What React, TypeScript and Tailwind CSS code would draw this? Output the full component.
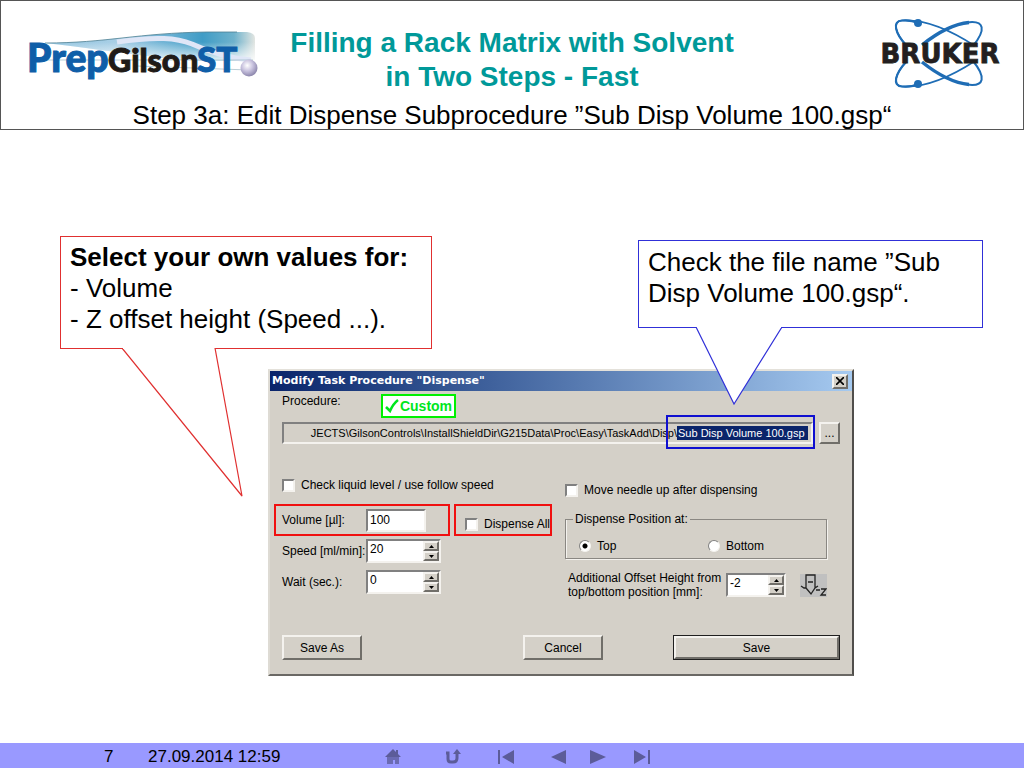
import { useState } from "react";
import type { ReactNode } from "react";

const DIRECTORY =
	"JECTS\\GilsonControls\\InstallShieldDir\\G215Data\\Proc\\Easy\\TaskAdd\\Disp\\";

const sunken =
	"border-2 border-t-[#808080] border-l-[#808080] border-r-[#f4f2ee] border-b-[#f4f2ee]";
const raised =
	"border-2 border-t-[#f4f2ee] border-l-[#f4f2ee] border-r-[#706e69] border-b-[#706e69] bg-[#d4d0c8]";

function GilsonLogo() {
	return (
		<svg
			aria-label="PrepGilsonST"
			className="h-[60px] w-[240px]"
			role="img"
			viewBox="0 0 240 60"
		>
			<defs>
				<linearGradient id="swoosh" x1="0" x2="1" y1="0" y2="0">
					<stop offset="0" stopColor="#8fc3de" />
					<stop offset="0.35" stopColor="#a9cfe6" />
					<stop offset="0.75" stopColor="#3f9cc6" />
					<stop offset="0.9" stopColor="#6fb2cc" />
					<stop offset="1" stopColor="#e3e6e2" />
				</linearGradient>
				<linearGradient id="swooshFade" x1="0" x2="0" y1="0" y2="1">
					<stop offset="0.35" stopColor="#ffffff" stopOpacity="0" />
					<stop offset="1" stopColor="#ffffff" stopOpacity="0.85" />
				</linearGradient>
				<radialGradient cx="0.4" cy="0.35" id="bead" r="0.65">
					<stop offset="0" stopColor="#ffffff" />
					<stop offset="0.5" stopColor="#c9c3df" />
					<stop offset="1" stopColor="#8d87ad" />
				</radialGradient>
			</defs>
			<path
				d="M18 17C80 17 110 7 180 6H220Q228 7 228 12V34C190 36 150 34 120 30C90 26 60 22 18 17Z"
				fill="url(#swoosh)"
			/>
			<path
				d="M18 17C80 17 110 7 180 6H220Q228 7 228 12V34C190 36 150 34 120 30C90 26 60 22 18 17Z"
				fill="url(#swooshFade)"
			/>
			<path
				d="M18 17C80 17 110 7 180 6H210"
				fill="none"
				stroke="#4c7f92"
				strokeWidth="0.8"
			/>
			<path
				d="M90 16C130 10 150 12 165 18C180 25 200 32 224 34"
				fill="none"
				stroke="#dfe6f7"
				strokeWidth="5"
			/>
			<path d="M12 34H226M110 40L222 44" stroke="#9bb7c4" strokeWidth="0.7" />
			<g
				fill="#0f5ea8"
				fontFamily="Lato, sans-serif"
				fontWeight="900"
				stroke="#0f5ea8"
			>
				<text fontSize="39" x="0" y="46">
					Prep
				</text>
				<text fontSize="35" x="170" y="46">
					ST
				</text>
			</g>
			<text
				fill="#1f1a17"
				fontFamily="Lato, sans-serif"
				fontSize="32"
				fontWeight="900"
				stroke="#1f1a17"
				x="81"
				y="46"
			>
				Gilson
			</text>
			<circle cx="222" cy="42" fill="url(#bead)" r="8.5" />
		</svg>
	);
}

function BrukerLogo() {
	return (
		<svg
			aria-label="Bruker"
			className="h-[72px] w-[126px]"
			role="img"
			viewBox="0 0 126 72"
		>
			<g fill="none" stroke="#1f6db5">
				<path d="M29 27C18 15 15 3 25 2.500C48 1 75 13 98 28" strokeWidth="1.600" />
				<path d="M29 27C18 15 15 3 25 2.500C32 2 37 3 41 5" strokeWidth="2.200" />
				<path d="M45 27C60 15 76 6 92 4.500" strokeWidth="3.500" />
				<path d="M90 4.500C108 2 109 12 96 28" strokeWidth="2" />
				<path d="M29 44C18 56 15 68 25 68.500C48 70 75 58 98 43" strokeWidth="1.600" />
				<path d="M29 44C18 56 15 68 25 68.500C32 69 37 68 41 66" strokeWidth="2.200" />
				<path d="M45 44C60 56 76 65 92 66.500" strokeWidth="3.500" />
				<path d="M90 66.500C108 69 109 59 96 43" strokeWidth="2" />
			</g>
			<circle cx="41" cy="5" fill="#1f6db5" r="4" />
			<circle cx="41" cy="66" fill="#1f6db5" r="4" />
			<text
				fill="#231f20"
				fontFamily="'DejaVu Sans', sans-serif"
				fontSize="26"
				fontWeight="700"
				stroke="#231f20"
				strokeWidth="0.8"
				textAnchor="middle"
				x="63"
				y="45"
			>
				BRUKER
			</text>
		</svg>
	);
}

function CheckField({ id, children }: { id: string; children: ReactNode }) {
	return (
		<div className="flex h-4 items-center gap-1.5">
			<input
				className={`size-[13px] shrink-0 appearance-none bg-white checked:bg-gray-700 ${sunken}`}
				id={id}
				type="checkbox"
			/>
			<label htmlFor={id}>{children}</label>
		</div>
	);
}

function RadioField({
	id,
	label,
	defaultChecked,
}: {
	id: string;
	label: string;
	defaultChecked?: boolean;
}) {
	return (
		<div className="flex items-center gap-1.5">
			<input
				className="size-3 appearance-none rounded-full border border-t-[#808080] border-r-[#f4f2ee] border-b-[#f4f2ee] border-l-[#808080] bg-white bg-[radial-gradient(#fff,#fff)] checked:bg-[radial-gradient(circle,#000_2px,#fff_3px)]"
				defaultChecked={defaultChecked}
				id={id}
				name="position"
				type="radio"
			/>
			<label htmlFor={id}>{label}</label>
		</div>
	);
}

function Spinner({
	id,
	initial,
	className,
}: {
	id: string;
	initial: number;
	className: string;
}) {
	const [value, setValue] = useState(String(initial));
	const step = (delta: number) => setValue(String(Number(value) + delta));

	return (
		<div className={`flex h-6 bg-white ${sunken} ${className}`}>
			<input
				className="h-4 w-full min-w-0 px-0.5 outline-none"
				id={id}
				onChange={(e) => setValue(e.target.value)}
				type="text"
				value={value}
			/>
			<div className="flex w-4 shrink-0 flex-col">
				<button
					aria-label="Increase"
					className={`flex flex-1 items-center justify-center ${raised}`}
					onClick={() => step(1)}
					type="button"
				>
					<svg className="h-[3px] w-[5px]" viewBox="0 0 5 3">
						<path d="M0 3L2.500 0L5 3Z" />
					</svg>
				</button>
				<button
					aria-label="Decrease"
					className={`flex flex-1 items-center justify-center ${raised}`}
					onClick={() => step(-1)}
					type="button"
				>
					<svg className="h-[3px] w-[5px]" viewBox="0 0 5 3">
						<path d="M0 0L2.500 3L5 0Z" />
					</svg>
				</button>
			</div>
		</div>
	);
}

function DispenseDialog() {
	return (
		<form className="ml-[268px] w-[586px] whitespace-nowrap border-2 border-t-[#e4e1da] border-r-[#504e4b] border-b-[#6a6864] border-l-[#dedbd4] bg-[#d4d0c8] text-[12px] text-black leading-[14px]">
			<div className="flex h-5 items-center justify-between bg-linear-to-r from-[#0a246a] to-[#a6caf0] pr-1 pl-0.5">
				<h2 className="font-['DejaVu_Sans',Verdana,sans-serif] font-bold text-[11px] text-white">
					Modify Task Procedure "Dispense"
				</h2>
				<button
					aria-label="Close"
					className={`flex h-[15px] w-4 items-center justify-center ${raised}`}
					type="button"
				>
					<svg
						className="size-2"
						stroke="#000"
						strokeWidth="1.600"
						viewBox="0 0 8 8"
					>
						<path d="M0 0L8 8M8 0L0 8" />
					</svg>
				</button>
			</div>

			<div className="px-3 pb-3.5">
				<div className="flex h-[31px] items-start pt-[3px]">
					<label className="w-[99px]" htmlFor="directory">
						Procedure:
					</label>
					<div className="flex h-6 w-[75px] items-center justify-center gap-px border-2 border-[#00f000] bg-white font-bold text-[#00e61e] text-[14px]">
						<svg
							className="size-3.5"
							fill="none"
							stroke="#00e61e"
							strokeWidth="2.500"
							viewBox="0 0 14 14"
						>
							<path d="M1 8L5 12Q8 5 13 1" />
						</svg>
						Custom
					</div>
				</div>

				<div className="flex h-[22px] gap-1.5">
					<div
						className={`relative flex w-[531px] items-center text-[11px] ${sunken}`}
					>
						<input
							className="w-[393px] bg-transparent text-right outline-none"
							defaultValue={DIRECTORY}
							id="directory"
							type="text"
						/>
						<input
							aria-label="File name"
							className="w-[131px] bg-[#0a246a] px-px text-white outline-none"
							defaultValue="Sub Disp Volume 100.gsp"
							type="text"
						/>
						<div className="-top-[9px] -right-1 pointer-events-none absolute h-[34px] w-[149px] border-2 border-[#0f0fd0]" />
					</div>
					<button
						aria-label="Browse"
						className={`w-[21px] ${raised}`}
						type="button"
					>
						...
					</button>
				</div>

				<div className="grid grid-cols-[283px_1fr]">
					<div className="pt-[33px]">
						<CheckField id="follow">
							Check liquid level / use follow speed
						</CheckField>
						<div className="-ml-2 mt-[11px] flex h-8 gap-1">
							<div className="flex w-[176px] items-center border-2 border-[#f01010] pl-1.5">
								<label className="w-[84px]" htmlFor="volume">
									Volume [µl]:
								</label>
								<input
									className={`h-[23px] w-[60px] bg-white px-0.5 outline-none ${sunken}`}
									defaultValue="100"
									id="volume"
									type="text"
								/>
							</div>
							<div className="flex w-[98px] items-end border-2 border-[#f01010] pb-0.5 pl-[9px]">
								<CheckField id="all">Dispense All</CheckField>
							</div>
						</div>
						<div className="mt-[3px] flex items-center">
							<label className="w-[84px]" htmlFor="speed">
								Speed [ml/min]:
							</label>
							<Spinner className="w-[75px]" id="speed" initial={20} />
						</div>
						<div className="mt-[7px] flex items-center">
							<label className="w-[84px]" htmlFor="wait">
								Wait (sec.):
							</label>
							<Spinner className="w-[75px]" id="wait" initial={0} />
						</div>
					</div>

					<div className="pt-[38px]">
						<CheckField id="needle">Move needle up after dispensing</CheckField>
						<fieldset className="mt-[13px] h-12 w-[262px] border border-[#8a8782] pl-[13px] shadow-[inset_1px_0_#f4f2ee,1px_1px_#f4f2ee]">
							<legend className="-ml-1.5 h-4 px-0.5 leading-4">
								Dispense Position at:
							</legend>
							<div className="grid grid-cols-[129px_1fr] pt-3">
								<RadioField defaultChecked id="top" label="Top" />
								<RadioField id="bottom" label="Bottom" />
							</div>
						</fieldset>
						<div className="mt-3 flex h-7 items-center pl-[3px]">
							<label className="w-[158px]" htmlFor="offset">
								Additional Offset Height from
								<br />
								top/bottom position [mm]:
							</label>
							<Spinner className="w-[60px]" id="offset" initial={-2} />
							<svg
								className="ml-3.5 h-[23px] w-[27px] bg-[#c0c0c0]"
								fill="none"
								stroke="#222"
								strokeWidth="1.300"
								viewBox="0 0 27 23"
							>
								<path d="M6 14V1H15V14M1 12L4 14H6L11 20L15 14L18 12M8 8H13M16 16H20" />
								<path d="M21 15H26L21 21H26" />
							</svg>
						</div>
					</div>
				</div>

				<div className="mt-9 flex h-[25px]">
					<button className={`w-20 ${raised}`} type="button">
						Save As
					</button>
					<button className={`ml-[161px] w-20 ${raised}`} type="button">
						Cancel
					</button>
					<div className="ml-[70px] w-[167px] border border-[#202020]">
						<button className={`size-full ${raised}`} type="submit">
							Save
						</button>
					</div>
				</div>
			</div>
		</form>
	);
}

const navClass = "flex size-5 items-center justify-center";

function Footer() {
	return (
		<footer className="flex h-[25px] items-center bg-[#9999ff] pt-0.5 text-[17px] text-black">
			<span className="w-[148px] pl-[104px]">7</span>
			<time className="w-[235px]">27.09.2014 12:59</time>
			<nav className="flex items-center">
				<a aria-label="Home" className={navClass} href="#home">
					<svg className="size-4" fill="#5c5c99" viewBox="0 0 16 16">
						<path d="M8 0L0 8H16L13 5V1H11V3Z" />
						<path d="M2 8H14V15H10V11H8V15H2Z" opacity="0.75" />
					</svg>
				</a>
				<a aria-label="Back" className={`ml-10 ${navClass}`} href="#back">
					<svg
						className="size-4"
						fill="none"
						stroke="#5c5c99"
						strokeWidth="3"
						viewBox="0 0 16 16"
					>
						<path d="M1 4H3V10Q3 13 6 13H8Q12 13 12 9V4" />
						<path d="M8 5L12 0L16 5Z" fill="#5c5c99" stroke="none" />
					</svg>
				</a>
				<a aria-label="First" className={`ml-[33px] ${navClass}`} href="#first">
					<svg className="size-4" fill="#5c5c99" viewBox="0 0 16 16">
						<path d="M0 1H2V15H0ZM16 1V15L4 8Z" />
					</svg>
				</a>
				<a aria-label="Previous" className={`ml-8 ${navClass}`} href="#prev">
					<svg className="size-4" fill="#5c5c99" viewBox="0 0 16 16">
						<path d="M16 1V15L1 8Z" />
					</svg>
				</a>
				<a aria-label="Next" className={`ml-5 ${navClass}`} href="#next">
					<svg className="size-4" fill="#5c5c99" viewBox="0 0 16 16">
						<path d="M0 1V15L16 8Z" />
					</svg>
				</a>
				<a aria-label="Last" className={`ml-6 ${navClass}`} href="#last">
					<svg className="size-4" fill="#5c5c99" viewBox="0 0 16 16">
						<path d="M14 1H16V15H14ZM0 1V15L12 8Z" />
					</svg>
				</a>
			</nav>
		</footer>
	);
}

export default function App() {
	return (
		<div className="flex min-h-screen flex-col bg-white font-['Liberation_Sans',Arial,sans-serif] text-black">
			<header className="h-[130px] border border-[#555]">
				<div className="mt-[25px] grid h-[68px] grid-cols-[260px_1fr_260px] items-start">
					<div className="pl-[26px]">
						<GilsonLogo />
					</div>
					<h1 className="whitespace-nowrap text-center font-bold text-[#009999] text-[28px] leading-[34px]">
						Filling a Rack Matrix with Solvent
						<br />
						in Two Steps - Fast
					</h1>
					<div className="-mt-2 flex justify-end pr-[20px]">
						<BrukerLogo />
					</div>
				</div>
				<p className="mt-1.5 whitespace-nowrap text-center text-[26px] leading-[31px]">
					Step 3a: Edit Dispense Subprocedure ”Sub Disp Volume 100.gsp“
				</p>
			</header>

			<main className="flex-1 pt-[106px]">
				<div className="flex items-start justify-between pr-[41px] pl-[60px] text-[26px] leading-[31px]">
					<aside className="relative z-10 h-[113px] w-[372px] border border-[#e03030] bg-white px-[9px] pt-[5px]">
						<strong>Select your own values for:</strong>
						<ul>
							<li>- Volume</li>
							<li>- Z offset height (Speed ...).</li>
						</ul>
						<svg
							className="absolute top-full left-[60px] h-[149px] w-[122px]"
							viewBox="0 0 122 149"
						>
							<path
								d="M1 0L121 148L94 0"
								fill="#fff"
								stroke="#e03030"
								strokeWidth="1.200"
							/>
						</svg>
						<div className="absolute top-full left-[62px] h-px w-[91px] bg-white" />
					</aside>
					<aside className="relative z-10 mt-1 h-[88px] w-[345px] border border-[#3030d8] bg-white px-[9px] pt-1.5">
						Check the file name ”Sub Disp Volume 100.gsp“.
						<svg
							className="absolute top-full left-[56px] h-[78px] w-[88px]"
							viewBox="0 0 88 78"
						>
							<path
								d="M1 0L39 77L87 0"
								fill="#fff"
								stroke="#3030d8"
								strokeWidth="1.200"
							/>
						</svg>
						<div className="absolute top-full left-[58px] h-px w-[84px] bg-white" />
					</aside>
				</div>
				<div className="mt-5">
					<DispenseDialog />
				</div>
			</main>

			<Footer />
		</div>
	);
}
